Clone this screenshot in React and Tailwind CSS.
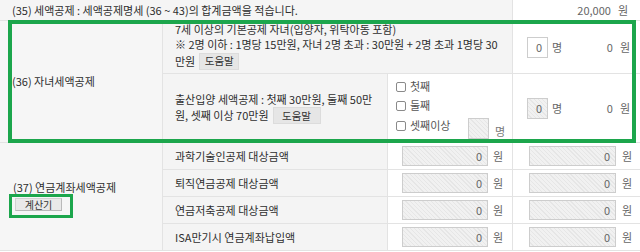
import React from 'react';

const hatch =
  'bg-[repeating-linear-gradient(45deg,#f1f1f1_0px,#f1f1f1_2px,#e6e6e6_2px,#e6e6e6_3px)]';

function NumBox({ className = '', disabled = false, value = '0' }) {
  return (
    <div
      className={`h-[20px] border border-[#cdcdcd] flex items-center justify-end pr-[5px] text-[#666] ${
        disabled ? hatch : 'bg-white'
      } ${className}`}
    >
      {value}
    </div>
  );
}

function Check({ label }) {
  return (
    <div className="flex items-center gap-[4px] leading-[15px]">
      <span className="w-[10px] h-[10px] border border-[#8a8a8a] rounded-[2px] bg-white" />
      <span className="text-[#555]">{label}</span>
    </div>
  );
}

function HelpButton({ w }) {
  return (
    <span
      className={`${w} h-[17px] ml-[4px] inline-flex items-center justify-center bg-[#e6e6e6] border border-[#dcdcdc] text-[10.5px] text-[#333]`}
    >
      도움말
    </span>
  );
}

const pension = ['과학기술인공제 대상금액', '퇴직연금공제 대상금액', '연금저축공제 대상금액', 'ISA만기시 연금계좌납입액'];

export default function App() {
  return (
    <div className="w-[640px] h-[252px] overflow-hidden bg-white text-[11px] text-[#2e2e2e] font-['Noto_Sans_CJK_KR','Noto_Sans',sans-serif]">
      {/* (35) */}
      <div className="grid grid-cols-[513px_1fr] h-[21px] border-b border-[#e3e3e3]">
        <div className="bg-[#f5f5f5] pl-[12px] flex items-center border-r border-[#e3e3e3] whitespace-nowrap">
          (35) 세액공제 : 세액공제명세 (36 ~ 43)의 합계금액을 적습니다.
        </div>
        <div className="flex items-center justify-end pr-[12px] text-[#666]">
          20,000<span className="ml-[7px]">원</span>
        </div>
      </div>

      {/* (36) */}
      <div className="relative grid grid-cols-[163px_225px_125px_1fr] grid-rows-[53px_68px] border-b border-[#e3e3e3]">
        <div className="row-span-2 bg-[#f6f6f6] border-r border-[#e3e3e3] flex items-center pl-[12px]">
          (36) 자녀세액공제
        </div>
        <div className="col-span-2 bg-[#f4f4f4] border-b border-r border-[#e3e3e3] pl-[12px] pt-[1px] whitespace-nowrap">
          <div className="leading-[15px]">7세 이상의 기본공제 자녀(입양자, 위탁아동 포함)</div>
          <div className="leading-[15px]">※ 2명 이하 : 1명당 15만원, 자녀 2명 초과 : 30만원 + 2명 초과 1명당 30</div>
          <div className="flex items-center h-[18px]">
            만원
            <HelpButton w="w-[40px]" />
          </div>
        </div>
        <div className="border-b border-[#e3e3e3] flex items-center pl-[14px] pr-[10px] text-[#666]">
          <NumBox className="w-[21px] h-[21px]" />
          <span className="ml-[4px]">명</span>
          <span className="ml-auto">0</span>
          <span className="ml-[7px]">원</span>
        </div>

        <div className="bg-[#f4f4f4] border-r border-[#e3e3e3] pl-[12px] flex flex-col justify-center leading-[15px] whitespace-nowrap">
          <div>출산입양 세액공제 : 첫째 30만원, 둘째 50만</div>
          <div className="flex items-center">
            원, 셋째 이상 70만원
            <HelpButton w="w-[48px]" />
          </div>
        </div>
        <div className="border-r border-[#e3e3e3] pl-[8px] pt-[5px] flex flex-col">
          <Check label="첫째" />
          <div className="mt-[4px]">
            <Check label="둘째" />
          </div>
          <div className="mt-[5px] flex items-start">
            <div className="w-[72px]">
              <Check label="셋째이상" />
            </div>
            <NumBox disabled value="" className="w-[21px] h-[21px]" />
            <span className="ml-[6px] mt-[5px] text-[#777]">명</span>
          </div>
        </div>
        <div className="flex items-center pl-[14px] pr-[10px] text-[#666]">
          <NumBox disabled className="w-[21px] h-[21px]" />
          <span className="ml-[4px]">명</span>
          <span className="ml-auto">0</span>
          <span className="ml-[7px]">원</span>
        </div>

        <div className="absolute left-[8px] right-[4px] top-[-1px] bottom-[-1px] border-[4px] border-[#1ca64c] pointer-events-none" />
      </div>

      {/* (37) */}
      <div className="grid grid-cols-[163px_225px_125px_1fr] grid-rows-[27px_27px_27px_27px]">
        <div className="row-span-4 bg-[#f6f6f6] border-r border-b border-[#e3e3e3] flex flex-col justify-center pl-[13px] pb-[2px]">
          <div className="leading-[15px]">(37) 연금계좌세액공제</div>
          <div className="mt-[3px] ml-[2px] relative w-[47px]">
            <div className="h-[13px] w-[47px] bg-[#e9e9e9] border border-[#d2d2d2] border-r-[#b9b9b9] border-b-[#b9b9b9] flex items-center justify-center text-[10px] leading-none text-[#333]">
              계산기
            </div>
            <div className="absolute left-[-6px] top-[-4px] right-[-11px] bottom-[-7px] border-[3px] border-[#1ca64c] pointer-events-none" />
          </div>
        </div>
        {pension.map((label) => (
          <React.Fragment key={label}>
            <div className="bg-[#f4f4f4] border-r border-b border-[#e3e3e3] flex items-center pl-[12px] whitespace-nowrap">
              {label}
            </div>
            <div className="border-r border-b border-[#e3e3e3] flex items-center pl-[14px] text-[#666]">
              <NumBox disabled className="w-[86px]" />
              <span className="ml-[5px]">원</span>
            </div>
            <div className="border-b border-[#e3e3e3] flex items-center pl-[16px] text-[#666]">
              <NumBox disabled className="w-[87px]" />
              <span className="ml-[6px]">원</span>
            </div>
          </React.Fragment>
        ))}
      </div>
    </div>
  );
}
